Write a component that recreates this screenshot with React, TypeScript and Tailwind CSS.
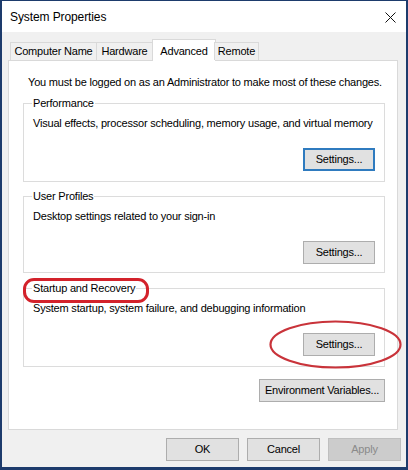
import React from "react";

type Tab = { label: string; w: string; active?: boolean };

const TABS: Tab[] = [
  { label: "Computer Name", w: "w-[87px]" },
  { label: "Hardware", w: "w-[57px]" },
  { label: "Advanced", w: "w-[64px]", active: true },
  { label: "Remote", w: "w-[45px]" },
];

// Segoe UI is not installed: Liberation Sans squeezed a bit to get its widths
const FONT = "font-['Segoe_UI','Liberation_Sans',Arial,sans-serif] text-[11px] tracking-[-0.2px] whitespace-nowrap";

function WinButton({
  label,
  w = "w-[72px]",
  focused,
  disabled,
}: {
  label: string;
  w?: string;
  focused?: boolean;
  disabled?: boolean;
}) {
  let cls = "bg-[#e1e1e1] border border-[#adadad] text-black";
  if (focused) cls = "bg-[#e1e1e1] border-2 border-[#2f7bbf] text-black";
  if (disabled) cls = "bg-[#cccccc] border border-[#bfbfbf] text-[#8a8a8a]";
  return (
    <div className={`${w} h-[23px] flex items-center justify-center leading-none ${cls}`}>
      {label}
    </div>
  );
}

function GroupBox({
  title,
  desc,
  mt,
  pb = "pb-[10px]",
  focused,
}: {
  title: string;
  desc: string;
  mt: string;
  pb?: string;
  focused?: boolean;
}) {
  return (
    <div className={`relative ${mt} ml-[14px] w-[362px] border border-[#dcdcdc] pl-[9px] pr-[9px] pt-[11px] ${pb}`}>
      <span className="absolute left-[8px] -top-[9px] bg-white px-[1px] leading-[16px]">{title}</span>
      <div className="leading-[16px]">{desc}</div>
      <div className="mt-[17px] flex justify-end">
        <WinButton label="Settings..." focused={focused} />
      </div>
    </div>
  );
}

export default function App() {
  return (
    <div className={`w-[408px] h-[470px] flex flex-col bg-[#f0f0f0] border-t border-l-2 border-r-2 border-b-[3px] border-[#1d3b6c] text-black ${FONT}`}>
      {/* TITLE BAR */}
      <div className="h-[31px] bg-white flex items-center justify-between pl-[8px] pr-[10px]">
        <span className="text-[12px] tracking-[-0.1px]">System Properties</span>
        <svg width="11" height="11" viewBox="0 0 11 11" className="mt-[2px]">
          <path d="M0.5 0.5 L10.5 10.5 M10.5 0.5 L0.5 10.5" stroke="#111" strokeWidth="1" />
        </svg>
      </div>

      {/* TABS */}
      <div className="mt-[7px] ml-[8px] h-[21px] flex items-end relative z-10">
        {TABS.map((t) =>
          t.active ? (
            <div
              key={t.label}
              className={`${t.w} h-[22px] -mb-px -mx-px bg-white border border-b-0 border-[#d9d9d9] flex items-start justify-center pt-[3px]`}
            >
              {t.label}
            </div>
          ) : (
            <div
              key={t.label}
              className={`${t.w} h-[18px] bg-[#f0f0f0] border border-b-0 border-[#d9d9d9] flex items-center justify-center -ml-px first:ml-0`}
            >
              {t.label}
            </div>
          )
        )}
      </div>

      {/* PANEL */}
      <div className="relative ml-[6px] w-[390px] h-[370px] bg-white border border-[#d9d9d9] flex flex-col">
        <div className="mt-[13px] pl-[19px] leading-[16px]">
          You must be logged on as an Administrator to make most of these changes.
        </div>

        <GroupBox
          title="Performance"
          desc="Visual effects, processor scheduling, memory usage, and virtual memory"
          mt="mt-[13px]"
          focused
        />
        <GroupBox
          title="User Profiles"
          desc="Desktop settings related to your sign-in"
          mt="mt-[14px]"
          pb="pb-[8px]"
        />
        <GroupBox
          title="Startup and Recovery"
          desc="System startup, system failure, and debugging information"
          mt="mt-[15px]"
        />

        <div className="mt-[12px] mr-[12px] flex justify-end">
          <WinButton label="Environment Variables..." w="w-[126px]" />
        </div>

        {/* red annotations */}
        <div className="absolute left-[14px] top-[217px] w-[126px] h-[25px] border-[3px] border-[#d3222b] rounded-[11px]" />
        <svg className="absolute left-[260px] top-[259px]" width="133" height="49" viewBox="0 0 133 49">
          <ellipse cx="66.5" cy="24.5" rx="65" ry="23" fill="none" stroke="#c9333a" strokeWidth="2.2" />
        </svg>
      </div>

      {/* BOTTOM BUTTONS */}
      <div className="mt-[8px] mr-[5px] flex justify-end gap-[8px]">
        <WinButton label="OK" w="w-[73px]" />
        <WinButton label="Cancel" w="w-[73px]" />
        <WinButton label="Apply" w="w-[73px]" disabled />
      </div>
    </div>
  );
}
